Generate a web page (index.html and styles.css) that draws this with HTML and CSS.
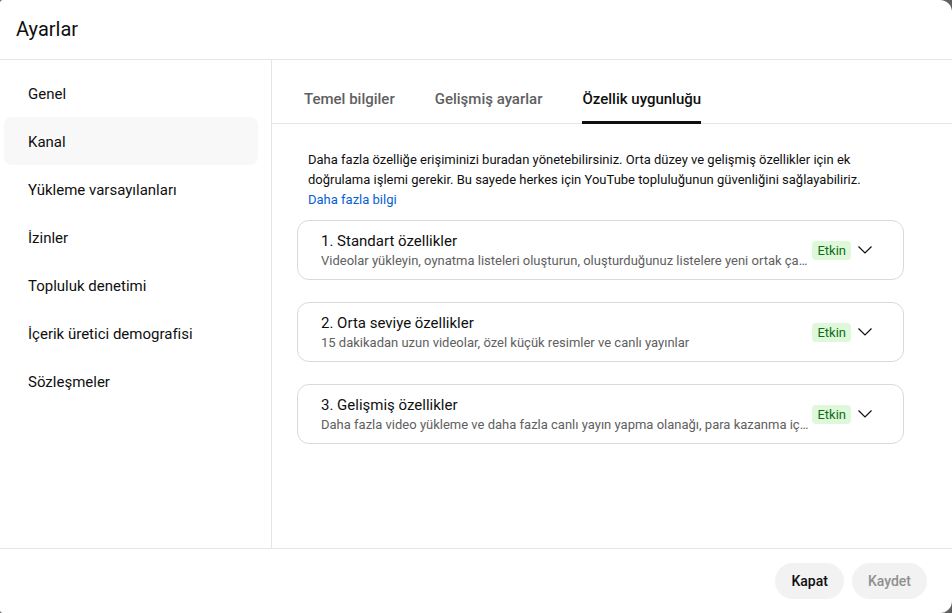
FILE: index.html
```html
<!DOCTYPE html>
<html lang="tr">
<head>
<meta charset="utf-8">
<title>Ayarlar</title>
<link rel="stylesheet" href="styles.css">
</head>
<body>
<div class="dialog">
  <header class="header"><h1 class="title">Ayarlar</h1></header>
  <div class="main">
    <nav class="sidebar">
      <div class="nav-item">Genel</div>
      <div class="nav-item active">Kanal</div>
      <div class="nav-item">Yükleme varsayılanları</div>
      <div class="nav-item">İzinler</div>
      <div class="nav-item">Topluluk denetimi</div>
      <div class="nav-item">İçerik üretici demografisi</div>
      <div class="nav-item">Sözleşmeler</div>
    </nav>
    <section class="content">
      <div class="tabs">
        <div class="tab">Temel bilgiler</div>
        <div class="tab">Gelişmiş ayarlar</div>
        <div class="tab selected">Özellik uygunluğu</div>
      </div>
      <div class="panel">
        <p class="desc">Daha fazla özelliğe erişiminizi buradan yönetebilirsiniz. Orta düzey ve gelişmiş özellikler için ek doğrulama işlemi gerekir. Bu sayede herkes için YouTube topluluğunun güvenliğini sağlayabiliriz.<br><a class="link" href="#">Daha fazla bilgi</a></p>
        <div class="cards">
          <div class="card">
            <div class="card-text">
              <div class="card-title">1. Standart özellikler</div>
              <div class="card-sub">Videolar yükleyin, oynatma listeleri oluşturun, oluşturduğunuz listelere yeni ortak çalışanlar ekleyin</div>
            </div>
            <span class="badge">Etkin</span>
            <svg class="chev" width="24" height="24" viewBox="0 0 24 24"><path d="M5.5 8.5 12 15l6.5-6.5" fill="none" stroke="#0f0f0f" stroke-width="1.2"/></svg>
          </div>
          <div class="card">
            <div class="card-text">
              <div class="card-title">2. Orta seviye özellikler</div>
              <div class="card-sub">15 dakikadan uzun videolar, özel küçük resimler ve canlı yayınlar</div>
            </div>
            <span class="badge">Etkin</span>
            <svg class="chev" width="24" height="24" viewBox="0 0 24 24"><path d="M5.5 8.5 12 15l6.5-6.5" fill="none" stroke="#0f0f0f" stroke-width="1.2"/></svg>
          </div>
          <div class="card">
            <div class="card-text">
              <div class="card-title">3. Gelişmiş özellikler</div>
              <div class="card-sub">Daha fazla video yükleme ve daha fazla canlı yayın yapma olanağı, para kazanma için başvurma</div>
            </div>
            <span class="badge">Etkin</span>
            <svg class="chev" width="24" height="24" viewBox="0 0 24 24"><path d="M5.5 8.5 12 15l6.5-6.5" fill="none" stroke="#0f0f0f" stroke-width="1.2"/></svg>
          </div>
        </div>
      </div>
    </section>
  </div>
  <footer class="footer">
    <button class="btn">Kapat</button>
    <button class="btn disabled">Kaydet</button>
  </footer>
</div>
</body>
</html>
```
FILE: styles.css
```css
* { box-sizing: border-box; }
html, body { margin: 0; padding: 0; }
body {
  background: #5f5f5f;
  font-family: Roboto, "Noto Sans", sans-serif;
  color: #0f0f0f;
  width: 952px;
  height: 613px;
  overflow: hidden;
}
.dialog {
  width: 952px;
  height: 613px;
  background: #fff;
  border-radius: 3px 12px 12px 3px;
  display: flex;
  flex-direction: column;
  overflow: hidden;
}
.header {
  height: 60px;
  border-bottom: 1px solid #e5e5e5;
  padding: 0 16px;
  display: flex;
  align-items: center;
  flex: none;
}
.title {
  margin: 0;
  font-size: 20px;
  font-weight: 400;
  line-height: 28px;
  padding-bottom: 2px;
}
.main {
  flex: 1;
  display: flex;
  min-height: 0;
}
.sidebar {
  width: 272px;
  flex: none;
  border-right: 1px solid #e5e5e5;
  padding: 9px 13px 0 4px;
}
.nav-item {
  height: 48px;
  display: flex;
  align-items: center;
  padding-left: 24px;
  padding-top: 2px;
  font-size: 15px;
  border-radius: 8px;
}
.nav-item.active { background: #f8f8f8; }
.content {
  flex: 1;
  min-width: 0;
  display: flex;
  flex-direction: column;
}
.tabs {
  height: 64px;
  border-bottom: 1px solid #e5e5e5;
  display: flex;
  gap: 40px;
  padding-left: 32px;
  flex: none;
}
.tab {
  font-size: 15px;
  font-weight: 500;
  color: #606060;
  display: flex;
  align-items: center;
  padding-top: 16px;
  padding-bottom: 0;
  border-bottom: 3px solid transparent;
  margin-bottom: -1px;
}
.tab.selected {
  color: #0f0f0f;
  border-bottom-color: #0f0f0f;
}
.panel {
  min-width: 0;
  padding: 26px 48px 0 25px;
}
.desc {
  margin: 0 0 10px 11px;
  font-size: 13px;
  line-height: 20px;
  color: #0f0f0f;
}
.link { color: #065fd4; text-decoration: none; }
.cards {
  display: flex;
  flex-direction: column;
  gap: 22px;
}
.card {
  height: 60px;
  border: 1px solid #d9d9d9;
  border-radius: 12px;
  display: flex;
  align-items: center;
  padding: 0 26px 0 23px;
  min-width: 0;
}
.card-text {
  flex: 1;
  min-width: 0;
  padding-top: 1px;
}
.card-title {
  font-size: 15px;
  line-height: 20px;
  margin-bottom: 1px;
}
.card-sub {
  font-size: 13px;
  line-height: 18px;
  color: #606060;
  white-space: nowrap;
  overflow: hidden;
  text-overflow: ellipsis;
}
.badge {
  flex: none;
  margin-left: 2px;
  background: #dff8d9;
  color: #0b6e21;
  font-size: 13px;
  line-height: 19px;
  padding: 0 5px;
  border-radius: 4px;
}
.chev {
  flex: none;
  margin-left: 2px;
  display: block;
}
.footer {
  height: 65px;
  border-top: 1px solid #e5e5e5;
  flex: none;
  display: flex;
  justify-content: flex-end;
  align-items: center;
  gap: 8px;
  padding: 0 25px 0 0;
}
.btn {
  font-family: Roboto, "Noto Sans", sans-serif;
  font-size: 14px;
  font-weight: 500;
  height: 36px;
  padding: 0 16px;
  border: none;
  border-radius: 18px;
  background: #f2f2f2;
  color: #0f0f0f;
}
.btn.disabled { color: #909090; }
```
